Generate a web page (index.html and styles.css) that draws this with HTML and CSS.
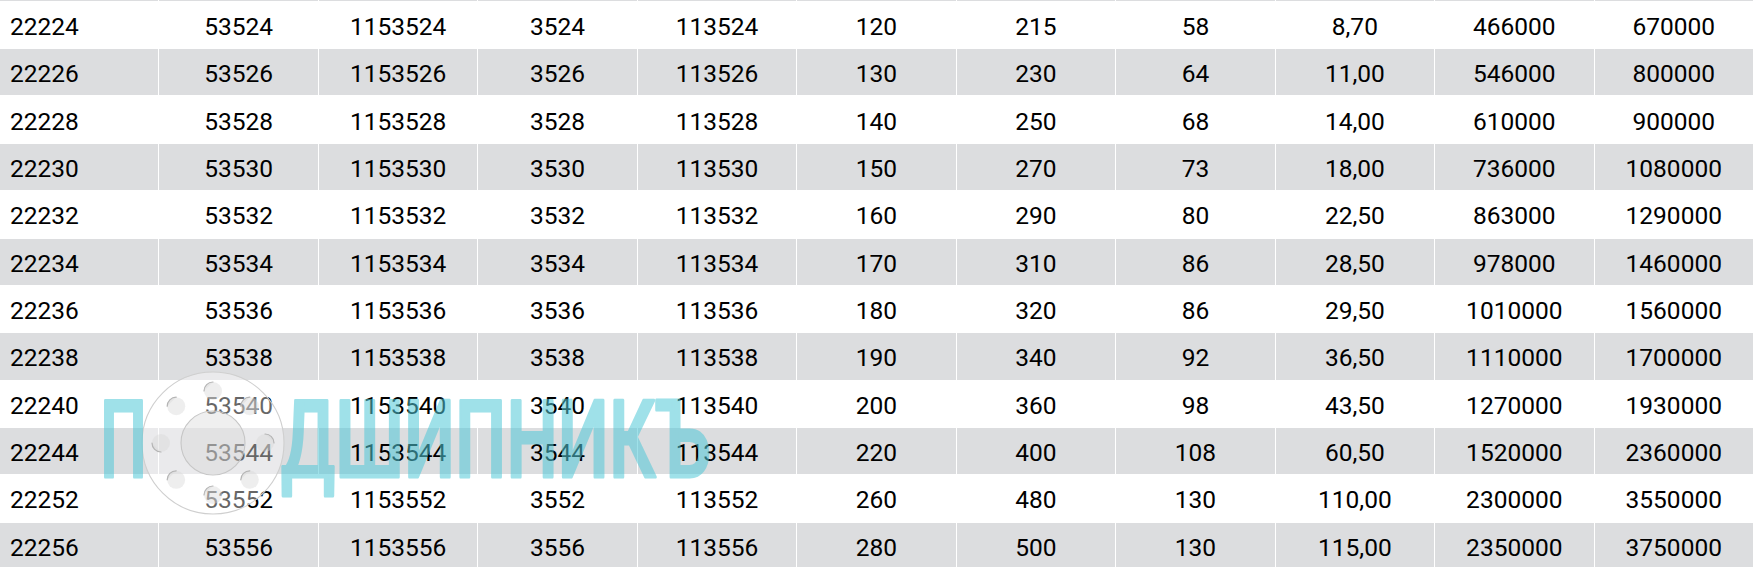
FILE: index.html
```html
<!DOCTYPE html>
<html lang="ru">
<head>
<meta charset="utf-8">
<title>Подшипники 222xx</title>
<link rel="stylesheet" href="styles.css">
</head>
<body>
<div class="sheet">
  <div class="grid">
    <div class="row edge"><div class="cell"></div><div class="cell"></div><div class="cell"></div><div class="cell"></div><div class="cell"></div><div class="cell"></div><div class="cell"></div><div class="cell"></div><div class="cell"></div><div class="cell"></div><div class="cell"></div></div>
    <div class="row"><div class="cell">22224</div><div class="cell">53524</div><div class="cell">1153524</div><div class="cell">3524</div><div class="cell">113524</div><div class="cell">120</div><div class="cell">215</div><div class="cell">58</div><div class="cell">8,70</div><div class="cell">466000</div><div class="cell">670000</div></div>
    <div class="row"><div class="cell">22226</div><div class="cell">53526</div><div class="cell">1153526</div><div class="cell">3526</div><div class="cell">113526</div><div class="cell">130</div><div class="cell">230</div><div class="cell">64</div><div class="cell">11,00</div><div class="cell">546000</div><div class="cell">800000</div></div>
    <div class="row"><div class="cell">22228</div><div class="cell">53528</div><div class="cell">1153528</div><div class="cell">3528</div><div class="cell">113528</div><div class="cell">140</div><div class="cell">250</div><div class="cell">68</div><div class="cell">14,00</div><div class="cell">610000</div><div class="cell">900000</div></div>
    <div class="row"><div class="cell">22230</div><div class="cell">53530</div><div class="cell">1153530</div><div class="cell">3530</div><div class="cell">113530</div><div class="cell">150</div><div class="cell">270</div><div class="cell">73</div><div class="cell">18,00</div><div class="cell">736000</div><div class="cell">1080000</div></div>
    <div class="row"><div class="cell">22232</div><div class="cell">53532</div><div class="cell">1153532</div><div class="cell">3532</div><div class="cell">113532</div><div class="cell">160</div><div class="cell">290</div><div class="cell">80</div><div class="cell">22,50</div><div class="cell">863000</div><div class="cell">1290000</div></div>
    <div class="row"><div class="cell">22234</div><div class="cell">53534</div><div class="cell">1153534</div><div class="cell">3534</div><div class="cell">113534</div><div class="cell">170</div><div class="cell">310</div><div class="cell">86</div><div class="cell">28,50</div><div class="cell">978000</div><div class="cell">1460000</div></div>
    <div class="row"><div class="cell">22236</div><div class="cell">53536</div><div class="cell">1153536</div><div class="cell">3536</div><div class="cell">113536</div><div class="cell">180</div><div class="cell">320</div><div class="cell">86</div><div class="cell">29,50</div><div class="cell">1010000</div><div class="cell">1560000</div></div>
    <div class="row"><div class="cell">22238</div><div class="cell">53538</div><div class="cell">1153538</div><div class="cell">3538</div><div class="cell">113538</div><div class="cell">190</div><div class="cell">340</div><div class="cell">92</div><div class="cell">36,50</div><div class="cell">1110000</div><div class="cell">1700000</div></div>
    <div class="row"><div class="cell">22240</div><div class="cell">53540</div><div class="cell">1153540</div><div class="cell">3540</div><div class="cell">113540</div><div class="cell">200</div><div class="cell">360</div><div class="cell">98</div><div class="cell">43,50</div><div class="cell">1270000</div><div class="cell">1930000</div></div>
    <div class="row"><div class="cell">22244</div><div class="cell">53544</div><div class="cell">1153544</div><div class="cell">3544</div><div class="cell">113544</div><div class="cell">220</div><div class="cell">400</div><div class="cell">108</div><div class="cell">60,50</div><div class="cell">1520000</div><div class="cell">2360000</div></div>
    <div class="row"><div class="cell">22252</div><div class="cell">53552</div><div class="cell">1153552</div><div class="cell">3552</div><div class="cell">113552</div><div class="cell">260</div><div class="cell">480</div><div class="cell">130</div><div class="cell">110,00</div><div class="cell">2300000</div><div class="cell">3550000</div></div>
    <div class="row"><div class="cell">22256</div><div class="cell">53556</div><div class="cell">1153556</div><div class="cell">3556</div><div class="cell">113556</div><div class="cell">280</div><div class="cell">500</div><div class="cell">130</div><div class="cell">115,00</div><div class="cell">2350000</div><div class="cell">3750000</div></div>
  </div>

  <svg class="watermark" viewBox="0 0 1753 567" xmlns="http://www.w3.org/2000/svg">
    <g class="wm-bearing">
      <circle cx="213" cy="443" r="71" fill="#ffffff" fill-opacity="0.4" stroke="#cfcfcf" stroke-width="1.1"/>
      <circle cx="213" cy="443" r="32" fill="#d6d6d6" fill-opacity="0.4" stroke="#c6c6c6" stroke-width="1.1"/>
      <g fill="#dadada" fill-opacity="0.45" stroke="#b4b4b4" stroke-width="1.2" stroke-linecap="round">
        <circle cx="265" cy="443" r="9" stroke="none"/>
        <path d="M 265 434 A 9 9 0 0 1 274 443"/>
        <circle cx="249.8" cy="406.2" r="9" stroke="none"/>
        <path d="M 240.8 406.2 A 9 9 0 0 1 249.8 397.2"/>
        <circle cx="213" cy="391" r="9" stroke="none"/>
        <path d="M 204 391 A 9 9 0 0 1 213 382"/>
        <circle cx="176.2" cy="406.2" r="9" stroke="none"/>
        <path d="M 167.2 406.2 A 9 9 0 0 1 176.2 397.2"/>
        <circle cx="161" cy="443" r="9" stroke="none"/>
        <path d="M 161 452 A 9 9 0 0 1 152 443"/>
        <circle cx="176.2" cy="479.8" r="9" stroke="none"/>
        <path d="M 167.2 479.8 A 9 9 0 0 1 176.2 470.8"/>
        <circle cx="213" cy="495" r="9" stroke="none"/>
        <path d="M 204 495 A 9 9 0 0 1 213 486"/>
        <circle cx="249.8" cy="479.8" r="9" stroke="none"/>
        <path d="M 240.8 479.8 A 9 9 0 0 1 249.8 470.8"/>
      </g>
    </g>
    <g class="wm-letters">
      <text x="100" y="477" textLength="47" lengthAdjust="spacingAndGlyphs">П</text>
      <text x="281" y="477" textLength="430" lengthAdjust="spacingAndGlyphs">ДШИПНИКЪ</text>
    </g>
  </svg>
</div>
</body>
</html>
```

FILE: styles.css
```css
html, body {
  margin: 0;
  padding: 0;
  background: #ffffff;
}

body {
  font-family: Roboto, "Liberation Sans", Arial, sans-serif;
  color: #000000;
}

.sheet {
  position: relative;
  width: 1753px;
  height: 567px;
  overflow: hidden;
  background: #ffffff;
}

.grid {
  display: grid;
  row-gap: 1px;
}

.row {
  display: grid;
  grid-template-columns: repeat(11, minmax(0, 1fr));
  column-gap: 1px;
  height: 46.35px;
}

.row.edge {
  height: 0.8px;
}

.row:nth-child(odd) .cell {
  background: #dcdddf;
}

.cell {
  box-sizing: border-box;
  display: flex;
  align-items: center;
  justify-content: center;
  padding-top: 4.6px;
  font-size: 24.5px;
  line-height: 1;
  white-space: nowrap;
  overflow: hidden;
}

.row.edge .cell {
  padding: 0;
}

.cell:first-child {
  justify-content: flex-start;
  padding-left: 10px;
}

.watermark {
  position: absolute;
  left: 0;
  top: 0;
  width: 1753px;
  height: 567px;
  pointer-events: none;
}

.wm-letters {
  opacity: 0.55;
  fill: #52c9d8;
  stroke: #52c9d8;
  stroke-width: 3;
  stroke-linejoin: round;
  font-family: Roboto, "DejaVu Sans", sans-serif;
  font-weight: 500;
  font-size: 108px;
}
```
